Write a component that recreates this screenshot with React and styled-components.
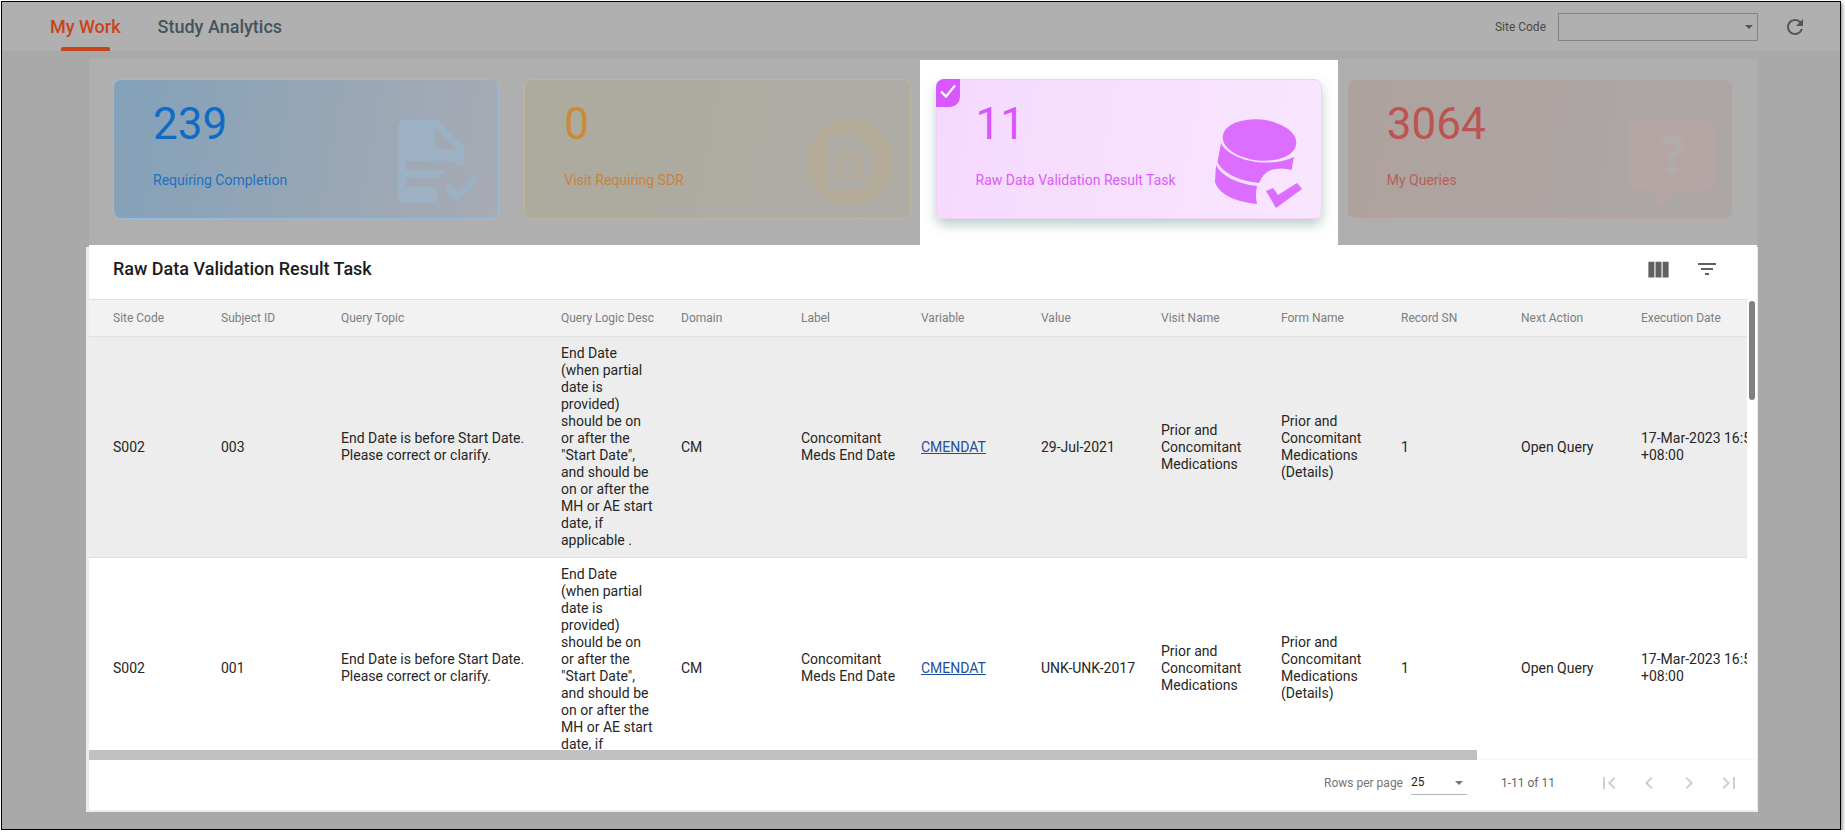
import React from 'react';
import styled, { createGlobalStyle, css } from 'styled-components';
import {
  MdRefresh,
  MdViewColumn,
  MdFilterList,
  MdFirstPage,
  MdLastPage,
  MdChevronLeft,
  MdChevronRight,
} from 'react-icons/md';

const GlobalStyle = createGlobalStyle`
  html, body {
    margin: 0;
    padding: 0;
    background: #fff;
    overflow: hidden;
  }
  body {
    font-family: Roboto, 'Liberation Sans', sans-serif;
  }
  * {
    box-sizing: border-box;
  }
`;

function DocCheckIcon({ color }) {
  return (
    <svg width="110" height="105" viewBox="0 0 110 105">
      <path
        fill={color}
        fillRule="evenodd"
        d="M20 10H53L80 35V55.5H72V51H22V60H62Q57 63 55 68H22V77H53Q52 85 54 93H20Q14 93 14 87V16Q14 10 20 10ZM51 17V39H73Z"
      />
      <path fill={color} d="M60 78L65 73L74 82L89 66L94 71L73.5 92Z" />
    </svg>
  );
}

function DocSearchIcon({ color }) {
  return (
    <svg width="110" height="105" viewBox="0 0 110 105">
      <path
        fill={color}
        fillRule="evenodd"
        d="M55 9A43 43 0 1 0 55 95A43 43 0 1 0 55 9ZM37 24H60L78 42V80H37Q33 80 33 76V28Q33 24 37 24Z"
      />
      <circle cx="55" cy="55" r="11" fill="none" stroke={color} strokeWidth="5" />
      <path d="M64 64L77 78" stroke={color} strokeWidth="4.5" fill="none" />
    </svg>
  );
}

function DatabaseCheckIcon({ color }) {
  return (
    <svg width="110" height="105" viewBox="0 0 110 105">
      <ellipse cx="54.5" cy="30" rx="37" ry="20.5" fill={color} transform="rotate(6 54.5 30)" />
      <path fill={color} d="M16 33C22 48 60 60 89 47L86.5 60Q76 57 66 60Q58 63 54 73C35 71 17 63 12.5 52Z" />
      <path fill={color} d="M11 55C16 66 34 74 52 76Q50 85 52 94C32 92 14 85 10 72Z" />
      <path fill={color} d="M61 81L68 78L73 85L92 73L97 79L71 98Z" />
    </svg>
  );
}

function QuestionIcon({ color, mark }) {
  return (
    <svg width="110" height="105" viewBox="0 0 110 105">
      <path
        fill={color}
        d="M21 11H93Q100 11 100 18V73Q100 80 93 80H64L46 96Q40 99 40 92V80H21Q14 80 14 73V18Q14 11 21 11Z"
      />
      <text x="57.5" y="63" textAnchor="middle" fontFamily="Roboto" fontWeight="900" fontSize="52" fill={mark}>
        ?
      </text>
    </svg>
  );
}

const kpis = [
  {
    id: 'completion',
    count: '239',
    label: 'Requiring Completion',
    from: '#83a1b9',
    to: '#a8abb3',
    border: '#97bbdc',
    numColor: '#0f6bc4',
    labelColor: '#2271c0',
    iconRight: 4,
    icon: <DocCheckIcon color="#9cb1c3" />,
  },
  {
    id: 'sdr',
    count: '0',
    label: 'Visit Requiring SDR',
    from: '#adaa9e',
    to: '#aeaca6',
    border: '#bfb5a1',
    numColor: '#cb8a33',
    labelColor: '#c4843f',
    iconRight: 5,
    icon: <DocSearchIcon color="#b3aa98" />,
  },
  {
    id: 'raw',
    count: '11',
    label: 'Raw Data Validation Result Task',
    from: '#f5d9fd',
    to: '#f9e6ff',
    border: '#f0d0fb',
    numColor: '#d955fc',
    labelColor: '#d95ef4',
    iconRight: 6,
    icon: <DatabaseCheckIcon color="#dd6dff" />,
    selected: true,
  },
  {
    id: 'queries',
    count: '3064',
    label: 'My Queries',
    from: '#aea29d',
    to: '#aca7a7',
    border: '#bda9a3',
    numColor: '#bc5451',
    labelColor: '#b5605c',
    iconRight: 7,
    icon: <QuestionIcon color="#b5a5a5" mark="#b1abaa" />,
  },
];

const columns = [
  'Site Code',
  'Subject ID',
  'Query Topic',
  'Query Logic Desc',
  'Domain',
  'Label',
  'Variable',
  'Value',
  'Visit Name',
  'Form Name',
  'Record SN',
  'Next Action',
  'Execution Date',
];

const colWidths = [132, 120, 220, 120, 120, 120, 120, 120, 120, 120, 120, 120, 170];

const logicDesc =
  'End Date (when partial date is provided) should be on or after the "Start Date", and should be on or after the MH or AE start date, if applicable .';

const rows = [
  { subject: '003', value: '29-Jul-2021' },
  { subject: '001', value: 'UNK-UNK-2017' },
];

function App() {
  return (
    <Frame>
      <GlobalStyle />
      <Header>
        <TabList>
          <Tab $active>My Work</Tab>
          <Tab>Study Analytics</Tab>
        </TabList>
        <HeaderRight>
          <SiteLabel>Site Code</SiteLabel>
          <SiteSelect>
            <Caret $color="#555" />
          </SiteSelect>
          <RefreshButton>
            <MdRefresh size={24} />
          </RefreshButton>
        </HeaderRight>
      </Header>

      <Content>
        <KpiSection>
          {kpis.map((kpi) => (
            <KpiSlot key={kpi.id} $spot={kpi.selected}>
              <KpiCard $from={kpi.from} $to={kpi.to} $border={kpi.border} $right={kpi.iconRight} $raised={kpi.selected}>
                {kpi.selected && (
                  <CheckTag>
                    <svg width="18" height="16" viewBox="0 0 18 16">
                      <path d="M2 8.5L7 13.5L16 2.5" fill="none" stroke="#fff" strokeWidth="2.2" />
                    </svg>
                  </CheckTag>
                )}
                <KpiText>
                  <KpiCount $color={kpi.numColor}>{kpi.count}</KpiCount>
                  <KpiLabel $color={kpi.labelColor}>{kpi.label}</KpiLabel>
                </KpiText>
                <KpiIcon>{kpi.icon}</KpiIcon>
              </KpiCard>
            </KpiSlot>
          ))}
        </KpiSection>

        <TableCard>
          <TableToolbar>
            <TableTitle>Raw Data Validation Result Task</TableTitle>
            <ToolbarIcons>
              <ToolButton>
                <MdViewColumn size={27} />
              </ToolButton>
              <ToolButton>
                <MdFilterList size={24} />
              </ToolButton>
            </ToolbarIcons>
          </TableToolbar>

          <TableWrap>
            <TableColumn>
              <Viewport>
                <DataTable>
                  <colgroup>
                    {colWidths.map((w, i) => (
                      <col key={i} style={{ width: w }} />
                    ))}
                  </colgroup>
                  <thead>
                    <tr>
                      {columns.map((c) => (
                        <Th key={c}>{c}</Th>
                      ))}
                    </tr>
                  </thead>
                  <tbody>
                    {rows.map((row, i) => (
                      <Row key={row.subject} $shaded={i === 0}>
                        <Td>S002</Td>
                        <Td>{row.subject}</Td>
                        <Td>End Date is before Start Date. Please correct or clarify.</Td>
                        <Td>{logicDesc}</Td>
                        <Td>CM</Td>
                        <Td>Concomitant Meds End Date</Td>
                        <Td>
                          <VarLink>CMENDAT</VarLink>
                        </Td>
                        <Td>{row.value}</Td>
                        <Td>Prior and Concomitant Medications</Td>
                        <Td>Prior and Concomitant Medications (Details)</Td>
                        <Td>1</Td>
                        <Td>Open Query</Td>
                        <Td>17-Mar-2023 16:59:10 +08:00</Td>
                      </Row>
                    ))}
                  </tbody>
                </DataTable>
              </Viewport>
              <HTrack>
                <HThumb />
              </HTrack>
            </TableColumn>
            <VRail>
              <VThumb />
            </VRail>
          </TableWrap>

          <Footer>
            <RowsLabel>Rows per page</RowsLabel>
            <RowsSelect>
              25
              <Caret $color="#757575" />
            </RowsSelect>
            <RangeText>1-11 of 11</RangeText>
            <Pager>
              <PageButton>
                <MdFirstPage size={24} />
              </PageButton>
              <PageButton>
                <MdChevronLeft size={24} />
              </PageButton>
              <PageButton>
                <MdChevronRight size={24} />
              </PageButton>
              <PageButton>
                <MdLastPage size={24} />
              </PageButton>
            </Pager>
          </Footer>
        </TableCard>
      </Content>
    </Frame>
  );
}

const Frame = styled.div`
  width: 1840px;
  height: 829px;
  margin: 1px 0 0 1px;
  border: 1px solid #000;
  background: #a9a9a9;
  box-shadow: 2px 2px 3px rgba(0, 0, 0, 0.35);
  overflow: hidden;
`;

const Header = styled.header`
  display: flex;
  align-items: center;
  justify-content: space-between;
  height: 49px;
  padding: 0 33px 0 48px;
  background: #b0b0b0;
`;

const TabList = styled.nav`
  display: flex;
  gap: 37px;
`;

const Tab = styled.div`
  position: relative;
  font-size: 18px;
  font-weight: 500;
  line-height: 49px;
  color: ${(p) => (p.$active ? '#c9431c' : '#43545e')};
  ${(p) =>
    p.$active &&
    css`
      &::after {
        content: '';
        position: absolute;
        left: 11px;
        right: 11px;
        bottom: 0;
        height: 4px;
        border-radius: 2px 2px 0 0;
        background: #c8431c;
      }
    `}
`;

const HeaderRight = styled.div`
  display: flex;
  align-items: center;
`;

const SiteLabel = styled.span`
  font-size: 12px;
  color: #4a4a4a;
  margin-right: 12px;
`;

const Caret = styled.span`
  position: absolute;
  right: 4px;
  top: 50%;
  margin-top: -2px;
  border-left: 4px solid transparent;
  border-right: 4px solid transparent;
  border-top: 4px solid ${(p) => p.$color};
`;

const SiteSelect = styled.div`
  position: relative;
  width: 200px;
  height: 28px;
  border: 1px solid #858585;
`;

const RefreshButton = styled.div`
  display: flex;
  width: 24px;
  height: 24px;
  margin-left: 25px;
  color: #555;
`;

const Content = styled.main`
  width: 1668px;
  margin: 8px 0 0 87px;
`;

const KpiSection = styled.section`
  display: grid;
  grid-template-columns: repeat(4, 1fr);
  gap: 25px;
  height: 186px;
  padding: 20px 24px 0;
  background: #afafaf;
`;

const KpiSlot = styled.div`
  position: relative;
  z-index: 0;
  height: 140px;
  ${(p) =>
    p.$spot &&
    css`
      &::before {
        content: '';
        position: absolute;
        inset: -19px -16px -26px -16px;
        z-index: -1;
        background: #fff;
      }
    `}
`;

const KpiCard = styled.div`
  position: relative;
  display: flex;
  justify-content: space-between;
  height: 140px;
  padding: 0 ${(p) => p.$right}px 0 39px;
  border: 1px solid ${(p) => p.$border};
  border-radius: 8px;
  background: linear-gradient(100deg, ${(p) => p.$from}, ${(p) => p.$to});
  ${(p) => p.$raised && 'box-shadow: 0 6px 12px rgba(60, 120, 110, 0.35);'}
`;

const CheckTag = styled.div`
  position: absolute;
  left: -1px;
  top: -1px;
  display: flex;
  align-items: center;
  justify-content: center;
  width: 24px;
  height: 28px;
  padding-bottom: 4px;
  border-radius: 8px 0 10px 0;
  background: #d957ff;
`;

const KpiText = styled.div`
  display: flex;
  flex-direction: column;
`;

const KpiCount = styled.div`
  margin-top: 19px;
  font-size: 44px;
  line-height: 50px;
  color: ${(p) => p.$color};
`;

const KpiLabel = styled.div`
  margin-top: 21px;
  font-size: 14px;
  line-height: 20px;
  color: ${(p) => p.$color};
`;

const KpiIcon = styled.div`
  flex-shrink: 0;
  height: 105px;
  margin-top: 30px;
`;

const TableCard = styled.section`
  background: #fff;
  box-shadow: -3px 2px 0 #ededed, 1px 2px 0 #ededed;
`;

const TableToolbar = styled.div`
  display: flex;
  align-items: center;
  justify-content: space-between;
  height: 54px;
  padding: 0 38px 6px 24px;
`;

const TableTitle = styled.h2`
  margin: 0 0 2px;
  font-size: 18px;
  font-weight: 500;
  color: #1c1c1c;
`;

const ToolbarIcons = styled.div`
  display: flex;
  align-items: center;
  gap: 23px;
`;

const ToolButton = styled.div`
  display: flex;
  color: #616161;
`;

const TableWrap = styled.div`
  display: flex;
  height: 461px;
`;

const TableColumn = styled.div`
  flex: 1;
  min-width: 0;
`;

const Viewport = styled.div`
  height: 451px;
  overflow: hidden;
`;

const DataTable = styled.table`
  width: 1682px;
  table-layout: fixed;
  border-collapse: collapse;
`;

const Th = styled.th`
  height: 37px;
  padding: 0 24px 0 0;
  border-top: 1px solid #e0e0e0;
  border-bottom: 1px solid #e0e0e0;
  background: #f2f2f2;
  font-size: 12px;
  font-weight: 400;
  text-align: left;
  white-space: nowrap;
  color: #7d7d7d;
  &:first-child {
    padding-left: 24px;
  }
`;

const Row = styled.tr`
  background: ${(p) => (p.$shaded ? '#ededed' : '#fff')};
  border-bottom: 1px solid #e0e0e0;
`;

const Td = styled.td`
  padding: 8px 25px 8px 0;
  font-size: 14px;
  line-height: 17px;
  vertical-align: middle;
  color: #262626;
  &:first-child {
    padding-left: 24px;
  }
`;

const VarLink = styled.a`
  color: #1f4f9c;
  text-decoration: underline;
`;

const HTrack = styled.div`
  height: 10px;
`;

const HThumb = styled.div`
  width: 1388px;
  height: 10px;
  background: #c1c1c1;
`;

const VRail = styled.div`
  flex-shrink: 0;
  width: 10px;
  padding: 2px 2px 0;
`;

const VThumb = styled.div`
  height: 99px;
  border-radius: 3px;
  background: #808080;
`;

const Footer = styled.footer`
  display: flex;
  align-items: center;
  justify-content: flex-end;
  height: 50px;
  padding: 0 8px 4px 0;
  box-shadow: 0 -1px 2px rgba(0, 0, 0, 0.05);
`;

const RowsLabel = styled.span`
  font-size: 12px;
  color: #757575;
  margin-right: 8px;
`;

const RowsSelect = styled.div`
  position: relative;
  width: 56px;
  height: 24px;
  line-height: 22px;
  font-size: 12px;
  color: #222;
  border-bottom: 1px solid #b5b5b5;
`;

const RangeText = styled.span`
  margin-left: 34px;
  font-size: 12px;
  color: #666;
`;

const Pager = styled.div`
  display: flex;
  margin-left: 34px;
`;

const PageButton = styled.div`
  display: flex;
  justify-content: center;
  width: 40px;
  color: #cfcfcf;
`;

export default App;
